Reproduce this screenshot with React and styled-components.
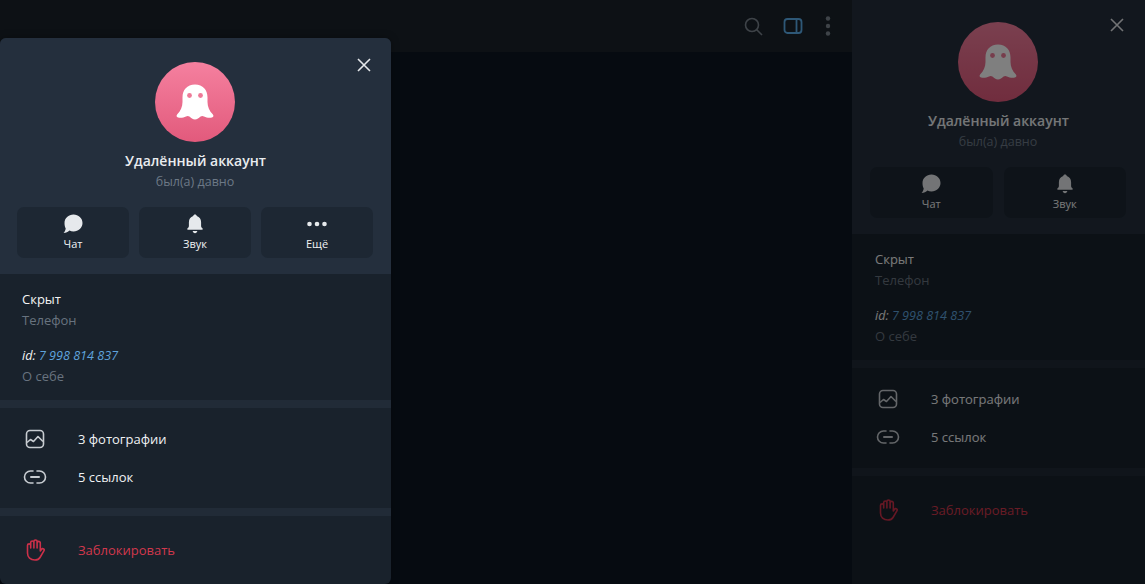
import React from 'react';
import styled, { createGlobalStyle } from 'styled-components';

const GlobalStyle = createGlobalStyle`
  html, body {
    margin: 0;
    height: 100%;
    background: #0e1621;
    font-family: "Open Sans", "Noto Sans", sans-serif;
  }
  #root { height: 100%; }
  * { box-sizing: border-box; }
`

const Page = styled.div`
  position: relative;
  display: grid;
  grid-template-columns: 852px 1fr;
  height: 100vh;
  overflow: hidden;
`

const ChatColumn = styled.div`
  display: flex;
  flex-direction: column;
  background: #0d1622;
`

const ChatHeader = styled.div`
  display: flex;
  justify-content: flex-end;
  align-items: center;
  gap: 16px;
  height: 52px;
  padding-right: 17px;
  background: #1a222b;
`

const HeaderIcon = styled.svg`
  display: block;
  width: ${p => p.$w || 24}px;
  height: 24px;
  fill: none;
  stroke: ${p => p.$color || '#7d8790'};
`

const HeaderDot = styled.circle`
  fill: #7d8790;
  stroke: none;
`

const Scrim = styled.div`
  position: absolute;
  inset: 0;
  background: rgba(0, 0, 0, 0.5);
`

const Popup = styled.div`
  position: absolute;
  left: 0;
  top: 38px;
  bottom: 0;
  width: 391px;
  border-radius: 6px;
  overflow: hidden;
  box-shadow: 0 0 8px rgba(0, 0, 0, 0.3);
`

const Card = styled.div`
  position: relative;
  height: 100%;
  background: #19222c;
  color: #f5f5f5;
  font-size: 13px;
  line-height: 21px;
`

const CloseButton = styled.svg`
  position: absolute;
  top: ${p => p.$top}px;
  right: ${p => p.$right}px;
  width: 14px;
  height: 14px;
  stroke: #e4e7ea;
  stroke-width: 1.6;
  fill: none;
`

const ProfileHead = styled.div`
  display: flex;
  flex-direction: column;
  align-items: center;
  padding: ${p => p.$top}px ${p => 18 + p.$inset}px 16px ${p => 17 + p.$inset}px;
  background: #242f3d;
`

const Avatar = styled.div`
  display: flex;
  align-items: center;
  justify-content: center;
  width: 80px;
  height: 80px;
  border-radius: 50%;
  background: linear-gradient(180deg, #f5809f 0%, #e25a7c 100%);
`

const Name = styled.div`
  margin-top: 8px;
  padding-left: 1px;
  font-size: 14px;
  font-weight: 600;
  color: #e9ecef;
`

const Status = styled.div`
  font-size: 12.5px;
  color: #6d7986;
`

const Actions = styled.div`
  display: grid;
  grid-template-columns: repeat(${p => p.$count}, 1fr);
  gap: ${p => (p.$count === 3 ? 10 : 11)}px;
  align-self: stretch;
  margin-top: 15px;
`

const ActionButton = styled.div`
  display: flex;
  flex-direction: column;
  align-items: center;
  height: 51px;
  padding-top: 7px;
  border-radius: 7px;
  background: #1d2733;
  font-size: 11px;
  line-height: 15px;
  color: #f0f2f4;
`

const ActionIcon = styled.svg`
  display: block;
  width: 20px;
  height: 20px;
  margin-bottom: 2px;
  fill: #e6e9ec;
`

const InfoSection = styled.div`
  display: flex;
  flex-direction: column;
  gap: 14px;
  padding: 15px ${p => 22 + p.$inset}px 13px;
`

const Field = styled.div`
  display: flex;
  flex-direction: column;
`

const FieldLabel = styled.div`
  color: #68737f;
`

const IdValue = styled.div`
  font-style: italic;
  font-size: 12.6px;
`

const IdLink = styled.span`
  color: #5fa3dc;
`

const Divider = styled.div`
  height: 8px;
  background: #212b37;
`

const RowList = styled.div`
  padding: ${p => p.$pad}px 0;
`

const Row = styled.div`
  display: flex;
  align-items: center;
  gap: 30px;
  height: 38px;
  padding-left: ${p => 22 + p.$inset}px;
  color: ${p => (p.$danger ? '#d1384c' : '#f0f2f4')};
`

const RowIcon = styled.div`
  display: flex;
  align-items: center;
  justify-content: center;
  width: 26px;
  height: 24px;
  color: ${p => (p.$danger ? '#cc3049' : '#c8cdd2')};
`

const Ghost = () => (
  <svg width="38" height="38" viewBox="0 0 38 38">
    <path
      fill="#fff"
      d="M19 1.500C11 1.500 6.500 7 6.500 14.500V19c0 5-2 9-5.200 12.300-1.200 1.300-.9 3 .8 3.300 2.900.5 5.600.1 7.900-1.200 1.400-.7 2.300-.7 3.400.2 1.500 1.300 3.600 2.900 5.600 2.900s4.100-1.600 5.600-2.900c1.100-.9 2-.9 3.400-.2 2.300 1.300 5 1.700 7.900 1.200 1.700-.3 2-2 .8-3.300C33.500 28 31.500 24 31.500 19v-4.500C31.500 7 27 1.500 19 1.500z"
    />
    <circle cx="13.500" cy="12.500" r="2.400" fill="#ee7a98" />
    <circle cx="24.500" cy="12.500" r="2.400" fill="#ee7a98" />
  </svg>
)

const ChatIcon = () => (
  <ActionIcon viewBox="0 0 20 20">
    <path d="M10.500.6C15.500.6 19.500 4.300 19.500 9s-4 8.400-9 8.400c-1.500 0-2.900-.3-4.100-.9-1.400 1.400-3.300 2.400-5.900 2.600 1.100-1.100 2-2.700 2.200-4.600C1.900 13 1.500 11 1.500 9 1.500 4.300 5.500.6 10.500.6z" />
  </ActionIcon>
)

const BellIcon = () => (
  <ActionIcon viewBox="0 0 20 20">
    <path d="M10 .5c1 0 1.700.7 1.800 1.600 2.700.8 4.300 3.200 4.300 6.200v3.800c0 1 .8 1.900 1.500 2.500.5.500.2 1.100-.5 1.100H2.900c-.7 0-1-.6-.5-1.100.7-.6 1.500-1.500 1.500-2.500V8.300c0-3 1.600-5.400 4.300-6.200C8.300 1.200 9 .5 10 .5zM7.700 17.100h4.600c-.2 1.300-1.100 2.200-2.300 2.200s-2.100-.9-2.300-2.200z" />
  </ActionIcon>
)

const DotsIcon = () => (
  <ActionIcon viewBox="0 0 20 20">
    <circle cx="2.500" cy="10" r="2.300" />
    <circle cx="10" cy="10" r="2.300" />
    <circle cx="17.500" cy="10" r="2.300" />
  </ActionIcon>
)

const PhotoIcon = () => (
  <svg width="20" height="20" viewBox="0 0 20 20" fill="none" stroke="currentColor" strokeWidth="1.600">
    <rect x="1.500" y="1.500" width="17" height="17" rx="3.500" />
    <path d="M2 13.500l3.500-3 3 2 4.500-5 5 5" strokeLinejoin="round" />
  </svg>
)

const LinkIcon = () => (
  <svg width="24" height="16" viewBox="0 0 24 16" fill="none" stroke="currentColor" strokeWidth="1.600" strokeLinecap="round">
    <path d="M10 2H7.500a6 6 0 0 0 0 12H10M14 2h2.500a6 6 0 0 1 0 12H14" />
    <path d="M8 8h8" strokeWidth="2" />
  </svg>
)

const HandIcon = () => (
  <svg width="20" height="22" viewBox="0 0 20 22" fill="none" stroke="currentColor" strokeWidth="1.600" strokeLinejoin="round" strokeLinecap="round">
    <path d="M2.500 14V6.500a1.600 1.600 0 0 1 3.200 0V9V3.600a1.600 1.600 0 0 1 3.200 0V9V2.600a1.600 1.600 0 0 1 3.200 0V9V4a1.600 1.600 0 0 1 3.200 0v8l1.300-1.800a1.400 1.400 0 0 1 2.300 1.600L15 18.500C14 20.200 12.500 21 10 21c-4.500 0-7.500-2.500-7.500-7z" />
  </svg>
)

const ProfileCard = ({ top, closeTop, closeRight, inset, withMore }) => (
  <Card>
    <CloseButton $top={closeTop} $right={closeRight} viewBox="0 0 14 14">
      <path d="M1 1l12 12M13 1L1 13" />
    </CloseButton>
    <ProfileHead $top={top} $inset={inset}>
      <Avatar><Ghost /></Avatar>
      <Name>Удалённый аккаунт</Name>
      <Status>был(а) давно</Status>
      <Actions $count={withMore ? 3 : 2}>
        <ActionButton><ChatIcon />Чат</ActionButton>
        <ActionButton><BellIcon />Звук</ActionButton>
        {withMore && <ActionButton><DotsIcon />Ещё</ActionButton>}
      </Actions>
    </ProfileHead>
    <InfoSection $inset={inset}>
      <Field>
        <div>Скрыт</div>
        <FieldLabel>Телефон</FieldLabel>
      </Field>
      <Field>
        <IdValue>id: <IdLink>7 998 814 837</IdLink></IdValue>
        <FieldLabel>О себе</FieldLabel>
      </Field>
    </InfoSection>
    <Divider />
    <RowList $pad={12}>
      <Row $inset={inset}><RowIcon><PhotoIcon /></RowIcon>3 фотографии</Row>
      <Row $inset={inset}><RowIcon><LinkIcon /></RowIcon>5 ссылок</Row>
    </RowList>
    <Divider />
    <RowList $pad={15}>
      <Row $danger $inset={inset}><RowIcon $danger><HandIcon /></RowIcon>Заблокировать</Row>
    </RowList>
  </Card>
)

const App = () => (
  <>
    <GlobalStyle />
    <Page>
      <ChatColumn>
        <ChatHeader>
          <HeaderIcon viewBox="0 0 24 24" strokeWidth="1.600">
            <circle cx="11" cy="11" r="6.500" />
            <path d="M15.500 15.500L21 21" />
          </HeaderIcon>
          <HeaderIcon viewBox="0 0 24 24" strokeWidth="1.800" $color="#5cb0ee">
            <rect x="3.500" y="5" width="17" height="14" rx="3" />
            <path d="M15.500 5v14" />
          </HeaderIcon>
          <HeaderIcon viewBox="0 0 14 24" $w={14}>
            <HeaderDot cx="7" cy="4.500" r="2.200" />
            <HeaderDot cx="7" cy="12" r="2.200" />
            <HeaderDot cx="7" cy="19.500" r="2.200" />
          </HeaderIcon>
        </ChatHeader>
      </ChatColumn>
      <ProfileCard top={22} closeTop={18} closeRight={21} inset={1} />
      <Scrim />
      <Popup>
        <ProfileCard top={24} closeTop={20} closeRight={20} inset={0} withMore />
      </Popup>
    </Page>
  </>
)

export default App
